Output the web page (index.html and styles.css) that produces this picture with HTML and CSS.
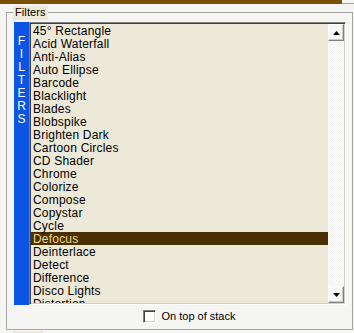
FILE: index.html
```html
<!DOCTYPE html>
<html>
<head>
<meta charset="utf-8">
<link rel="stylesheet" href="styles.css">
</head>
<body>
<div class="topbar"><div class="topbar-fill"></div><div class="topbar-end"></div></div>
<div class="group">
  <div class="legend">Filters</div>
  <div class="content">
    <div class="strip"><span>F</span><span>I</span><span>L</span><span>T</span><span>E</span><span>R</span><span>S</span></div>
    <div class="listbox">
      <ul class="items">
        <li>45° Rectangle</li>
        <li>Acid Waterfall</li>
        <li>Anti-Alias</li>
        <li>Auto Ellipse</li>
        <li>Barcode</li>
        <li>Blacklight</li>
        <li>Blades</li>
        <li>Blobspike</li>
        <li>Brighten Dark</li>
        <li>Cartoon Circles</li>
        <li>CD Shader</li>
        <li>Chrome</li>
        <li>Colorize</li>
        <li>Compose</li>
        <li>Copystar</li>
        <li>Cycle</li>
        <li class="sel">Defocus</li>
        <li>Deinterlace</li>
        <li>Detect</li>
        <li>Difference</li>
        <li>Disco Lights</li>
        <li>Distortion</li>
      </ul>
      <div class="scrollbar">
        <div class="sbtn"><svg width="7" height="4" viewBox="0 0 7 4"><path d="M3.5 0 L7 4 L0 4 Z" fill="#000"/></svg></div>
        <div class="track"></div>
        <div class="sbtn"><svg width="7" height="4" viewBox="0 0 7 4"><path d="M0 0 L7 0 L3.5 4 Z" fill="#000"/></svg></div>
      </div>
    </div>
  </div>
  <div class="checkrow">
    <span class="check"></span><span class="checklabel">On top of stack</span>
  </div>
</div>
<div class="nextlegend"></div>
</body>
</html>
```
FILE: styles.css
```css
html, body {
  margin: 0;
  padding: 0;
}
body {
  width: 354px;
  height: 333px;
  overflow: hidden;
  background: #f5f5f4;
  font-family: "Liberation Sans", Arial, sans-serif;
  font-size: 11px;
  color: #000;
}
.topbar {
  display: flex;
  height: 4px;
}
.topbar-fill {
  width: 342px;
  background: #7a5000;
}
.topbar-end {
  flex: 1;
  border-bottom: 1px solid #a0a0a0;
  background: #f5f5f4;
}
.group {
  position: relative;
  margin: 8px 0 0 6px;
  width: 345px;
  height: 316px;
  border: 1px solid #a5a5a5;
}
.legend {
  position: absolute;
  top: -7px;
  left: 6px;
  padding: 0 2px 0 2px;
  height: 14px;
  line-height: 13px;
  background: #ece9d8;
  font-size: 11px;
  letter-spacing: 0.1px;
}
.content {
  display: flex;
  margin: 9px 6px 0 7px;
  height: 283px;
}
.strip {
  width: 15px;
  background: #0a55e6;
  color: #fff;
  display: flex;
  flex-direction: column;
  align-items: center;
  padding-top: 13px;
  box-sizing: border-box;
  font-size: 12px;
}
.strip span {
  height: 13px;
  line-height: 13px;
}
.listbox {
  flex: 1;
  display: flex;
  border-top: 1px solid #808080;
  border-left: 1px solid #808080;
  border-right: 1px solid #ffffff;
  border-bottom: 1px solid #ffffff;
  box-shadow: inset 1px 1px 0 #404040, inset -1px -1px 0 #d4d0c8;
  background: #ece9d8;
  padding: 1px;
  overflow: hidden;
}
.items {
  list-style: none;
  margin: 0;
  padding: 0;
  flex: 1;
  overflow: hidden;
}
.items li {
  height: 13px;
  line-height: 14px;
  padding-left: 2px;
  white-space: nowrap;
  font-size: 12px;
  letter-spacing: 0.2px;
}
.items li.sel {
  background: #4a3000;
  color: #f2d890;
}
.scrollbar {
  width: 16px;
  display: flex;
  flex-direction: column;
  background-color: #fbfbfb;
  background-image: repeating-conic-gradient(#ffffff 0 25%, #f0f0f0 0 50%);
  background-size: 2px 2px;
}
.sbtn {
  height: 17px;
  box-sizing: border-box;
  background: #f7f7f7;
  border-top: 1px solid #ffffff;
  border-left: 1px solid #ffffff;
  border-right: 1px solid #808080;
  border-bottom: 1px solid #808080;
  box-shadow: inset -1px -1px 0 #c8c8c8;
  display: flex;
  align-items: center;
  justify-content: center;
}
.track {
  flex: 1;
}
.checkrow {
  display: flex;
  align-items: center;
  justify-content: center;
  margin: 4px 0 0 19px;
  height: 14px;
}
.check {
  width: 13px;
  height: 13px;
  box-sizing: border-box;
  background: #fff;
  border-top: 1px solid #808080;
  border-left: 1px solid #808080;
  border-right: 1px solid #fff;
  border-bottom: 1px solid #fff;
  box-shadow: inset 1px 1px 0 #404040, inset -1px -1px 0 #d4d0c8;
  margin-right: 6px;
}
.checklabel {
  font-size: 11px;
  line-height: 13px;
}
.nextlegend {
  margin: 1px 0 0 13px;
  width: 30px;
  height: 3px;
  background: #ece9d8;
}
```
